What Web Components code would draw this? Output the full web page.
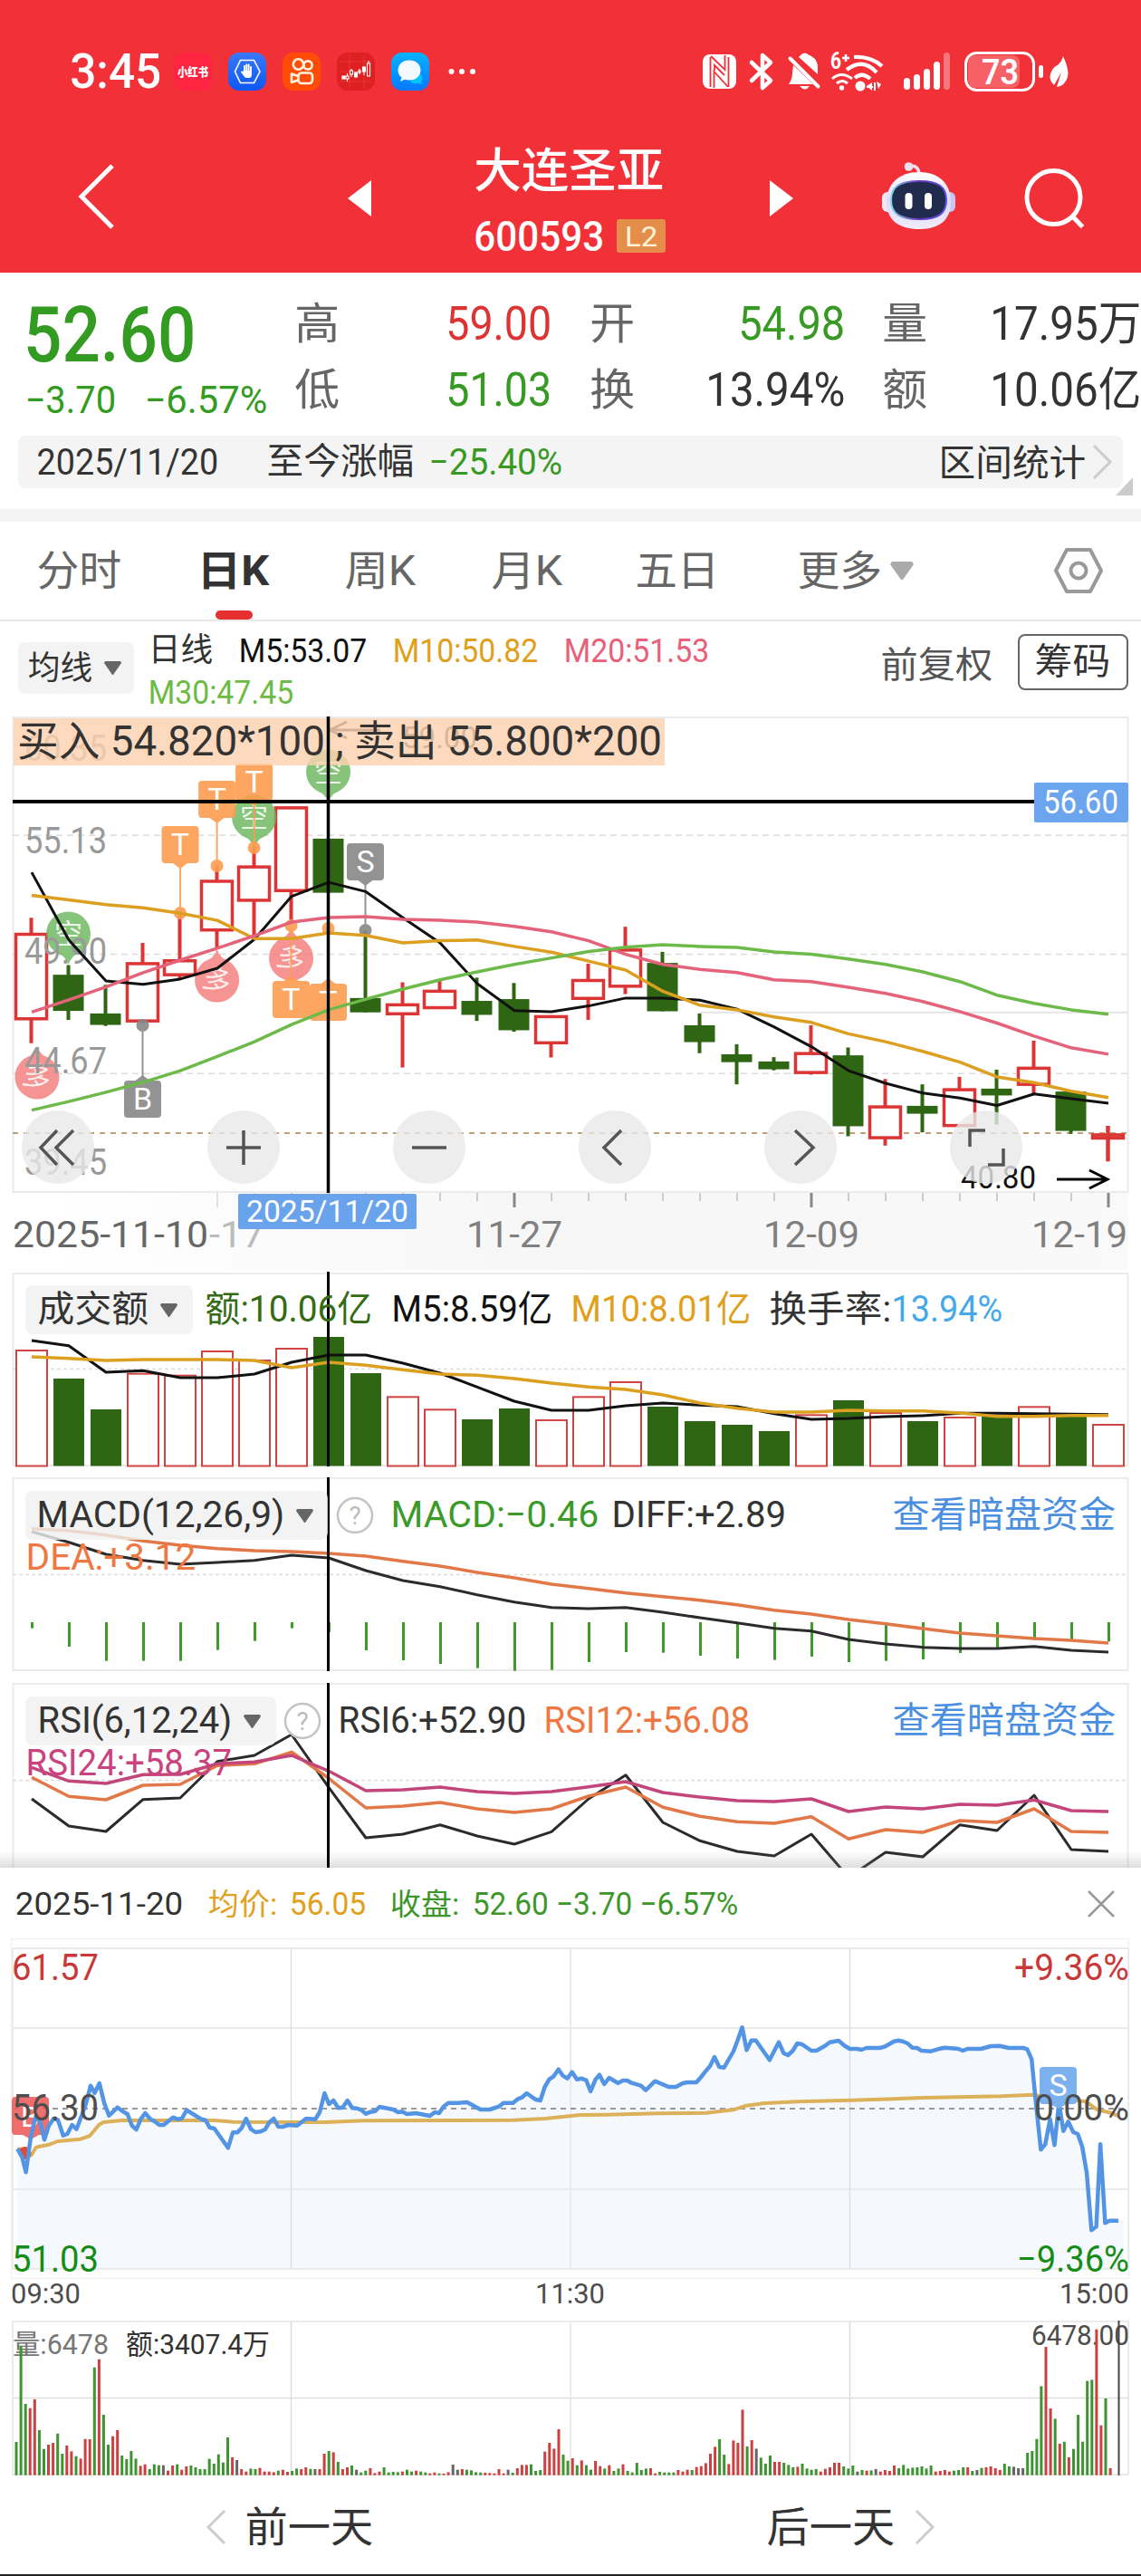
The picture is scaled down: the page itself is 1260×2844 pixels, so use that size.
<!DOCTYPE html>
<html lang="zh-CN">
<head>
<meta charset="utf-8">
<title>大连圣亚 600593</title>
<style>
body {
	margin: 0;
	background: #fff;
	color: #333;
	font-family: Roboto, "Noto Sans CJK SC", sans-serif;
}
</style>
</head>
<body>
<stock-app></stock-app>

<script>
const define = (name, html, setup) => {
  const template = document.createElement('template');
  template.innerHTML = html;
  window.customElements.define(
    name,
    class extends HTMLElement {
      constructor() {
        super();
        this.attachShadow({ mode: 'open' });
        this.shadowRoot.appendChild(template.content.cloneNode(true));
        if (setup) setup(this.shadowRoot, this);
      }
    }
  );
};

// Single line of text condensed to a given width
class FitText extends HTMLElement {
  constructor() {
    super();
    this.attachShadow({ mode: 'open' });
    this.shadowRoot.innerHTML = `
<style>
:host {
	display: inline-block;
	flex: none;
	white-space: nowrap;
	line-height: 1;
}
span {
	display: inline-block;
	transform-origin: 0 50%;
}
</style>
<span><slot></slot></span>`;
  }

  connectedCallback() {
    const width = Number(this.getAttribute('w'));
    const size = Number(this.getAttribute('size'));
    this.style.fontSize = `${size}px`;
    this.style.height = `${size}px`;
    const span = this.shadowRoot.querySelector('span');
    const natural = span.getBoundingClientRect().width;
    this.style.width = `${width}px`;
    // pull back by the side bearing so the glyph edge sits on the box edge
    if (natural) span.style.transform = `translateX(${-size * 0.035}px) scaleX(${(width + size * 0.04) / natural})`;
  }
}
window.customElements.define('fit-text', FitText);

// ---- svg helpers ----
const STEP = 41;
const cx = (i) => 35 + STEP * i;
const label = (x, y, w, size, fill, str, extra = '') =>
  `<text x="${x - 1}" y="${y}" font-size="${size}" fill="${fill}" textLength="${w + 1}" lengthAdjust="spacingAndGlyphs" ${extra}>${str}</text>`;
const series = (values, toY, color, width = 3) =>
  `<polyline fill="none" stroke="${color}" stroke-width="${width}" stroke-linejoin="round" points="${values
    .map((v, i) => `${cx(i)},${toY(v).toFixed(1)}`)
    .join(' ')}"/>`;
const hline = (x1, x2, y, color, width = 2, dash = '') =>
  `<path d="M${x1} ${y}H${x2}" stroke="${color}" stroke-width="${width}" ${dash ? `stroke-dasharray="${dash}"` : ''} fill="none"/>`;
const vline = (x, y1, y2, color, width = 2) =>
  `<path d="M${x} ${y1}V${y2}" stroke="${color}" stroke-width="${width}" fill="none"/>`;
const frame = (y, h) =>
  `<rect x="14.500" y="${y}" width="1231" height="${h}" fill="none" stroke="#ebebeb" stroke-width="2"/>`;

define('status-bar', `
<style>
:host {
	display: flex;
	align-items: center;
	box-sizing: border-box;
	height: 108px;
	padding: 50px 79px 0 79px;
	color: #fff;
}
.apps {
	display: flex;
	gap: 18px;
	margin-left: 14px;
}
.system {
	display: flex;
	align-items: center;
	margin-left: auto;
}
svg {
	display: block;
	overflow: visible;
}
.dots { margin-left: 21px; }
</style>
<fit-text w="99" size="53" style="font-weight:500">3:45</fit-text>
<div class="apps">
	<svg width="42" height="42" viewBox="0 0 42 42"><rect width="42" height="42" rx="12" fill="#ff2442"/><text x="4" y="26" font-size="13" font-weight="900" fill="#fff" textLength="34" lengthAdjust="spacingAndGlyphs">小红书</text></svg>
	<svg width="42" height="42" viewBox="0 0 42 42">
		<defs><linearGradient id="b" x2="0" y2="1"><stop stop-color="#3a78fb"/><stop offset="1" stop-color="#0d58f2"/></linearGradient></defs>
		<rect width="42" height="42" rx="12" fill="url(#b)"/>
		<path d="M13.500 8.500h15L35 21l-6.500 12.500h-15L7.500 21z" fill="none" stroke="#fff" stroke-width="1.600"/>
		<path d="M18 21v-6M20.300 20v-6.500M22.600 20v-6.500M25 21v-5M18 24l-3-2.500" stroke="#fff" stroke-width="1.900" stroke-linecap="round"/>
		<path d="M17 20h9v4c0 2.500-1 4-3 4h-3c-1.500 0-3-2-5-5.500z" fill="#fff"/>
	</svg>
	<svg width="42" height="42" viewBox="0 0 42 42"><rect width="42" height="42" rx="12" fill="#ff4c06"/><g fill="none" stroke="#fff3e0" stroke-width="2.600"><circle cx="17.500" cy="13" r="5.700"/><circle cx="28" cy="14" r="4.600"/><rect x="17.500" y="22.500" width="15.500" height="11.500" rx="3.500"/><path d="M17 26l-7-2.500v9.500l7-2.500" stroke-linejoin="round"/></g></svg>
	<svg width="42" height="42" viewBox="0 0 42 42"><rect width="42" height="42" rx="12" fill="#df2022"/><path d="M3 10h36M3 21h36M3 32h36M14 2v38M30 2v38" stroke="#e83a3a" stroke-width=".8"/><g stroke="#fff" stroke-width="1.100" fill="none"><rect x="6" y="26" width="3" height="3" fill="#fff"/><path d="M11.500 23v9M16 18v9M25 18v6"/><rect x="10" y="26" width="3" height="3" fill="#df2022"/><rect x="14.500" y="20" width="3" height="4" fill="#df2022"/><rect x="19.500" y="22" width="3" height="5" fill="#fff"/><rect x="24" y="20" width="2" height="2"/><rect x="28.500" y="16" width="3" height="5" fill="#fff"/><rect x="33.500" y="12" width="3" height="14"/><path d="M30 21v4M35 9v3"/></g></svg>
	<svg width="42" height="42" viewBox="0 0 42 42">
		<defs><linearGradient id="c" x2="0" y2="1"><stop stop-color="#06b4ff"/><stop offset="1" stop-color="#0877ff"/></linearGradient></defs>
		<rect width="42" height="42" rx="12" fill="url(#c)"/><path d="M28 23a6.500 5.500 0 0 1 5 9l1 3-4-1.200a7 6 0 0 1-9-2z" fill="#04c6fb"/><path d="M20 8.500c7.500 0 12.500 4.800 12.500 11S27.500 30.500 20 30.500q-3 0-5-.8l-5 2.300 1.500-4.500C8.800 25.500 7.500 23 7.500 19.500c0-6.200 5-11 12.500-11z" fill="#f3faff"/>
	</svg>
</div>
<svg class="dots" width="32" height="8" fill="#fff"><circle cx="3.500" cy="4" r="3"/><circle cx="15" cy="4" r="3"/><circle cx="27" cy="4" r="3"/></svg>
<div class="system">
	<svg width="37" height="38" viewBox="0 0 37 38"><rect width="37" height="38" rx="8" fill="#fff"/><path d="M8.500 3v33M28.500 3v33" stroke="#f23038" stroke-width="1.800"/><path d="M9 2l15.500 15V1M12.500 37V19l15.500 17M13 18v-6l11 11" fill="none" stroke="#f23038" stroke-width="1.800"/></svg>
	<svg width="26" height="42" viewBox="0 0 26 42" style="margin-left:15px"><path d="M2 11l21 20-9 8V3l9 8L2 31" fill="none" stroke="#fff" stroke-width="4.500" stroke-linecap="round" stroke-linejoin="round"/></svg>
	<svg width="36" height="42" viewBox="0 0 36 42" style="margin-left:16px" fill="#fff"><path d="M12 5l3-3q4-3 7 0 9 3 11 12v10zM6 14l22 21H1q4-5 4-13zM13 37h11q-5 7-11 0z"/><path d="M6 4l31 31" stroke="#f23038" stroke-width="3"/><path d="M2.500 6.500l31 31" stroke="#fff" stroke-width="4" stroke-linecap="round"/></svg>
	<svg width="60" height="42" viewBox="0 0 60 42" style="margin-left:12px" fill="none" stroke="#fff" stroke-width="4.200"><path d="M25 5q19-1 31 10M17 19q18-14 33 3M26 28q8-7 17 1"/><path d="M1 29q10-9 22 0M6 34q6-5 12 0" stroke-width="3"/><circle cx="11.500" cy="39" r="2.700" fill="#fff" stroke="none"/><circle cx="32" cy="37" r="5.500" fill="#fff" stroke="none"/><path d="M45 33v9l-6-5zM50 31v10M50 32l5 3-3 5z" stroke="none" fill="#fff"/><path d="M39 38h7M48 33v9" stroke-width="2"/><text x="-1" y="18" font-size="25" font-weight="700" fill="#fff" stroke="none" textLength="12" lengthAdjust="spacingAndGlyphs">6</text><path d="M16 2v8M12 6h8" stroke-width="2.600"/></svg>
	<svg width="52" height="42" viewBox="0 0 52 42" style="margin-left:20px" fill="#fff"><rect y="28" width="7" height="13" rx="3.500"/><rect x="11" y="24" width="7" height="17" rx="3.500"/><rect x="22" y="18" width="7" height="23" rx="3.500"/><rect x="33" y="10" width="7" height="31" rx="3.500"/><rect x="44" width="7" height="41" rx="3.500" opacity=".35"/></svg>
	<svg width="87" height="44" viewBox="0 0 87 44" style="margin-left:15px"><rect x="4" y="4" width="57" height="36" rx="8" fill="#fff" opacity=".24"/><rect x="1.500" y="1.500" width="75" height="41" rx="12" fill="none" stroke="#fff" stroke-width="3"/><rect x="82" y="15" width="5" height="14" rx="2.500" fill="#fff"/><text x="19" y="36" font-size="38" font-weight="600" fill="#fff" textLength="41" lengthAdjust="spacingAndGlyphs">73</text></svg>
	<svg width="22" height="34" viewBox="0 0 22 34" style="margin-left:7px"><path d="M15 0q7 15 5 23-3 10-12 11l5-16-8 14Q-3 25 3 15 6 11 10 9q4-4 5-9z" fill="#fff"/></svg>
</div>
`);

define('stock-nav', `
<style>
:host {
	display: flex;
	height: 193px;
	padding-left: 87px;
	align-items: flex-start;
	color: #fff;
}
svg {
	display: block;
	overflow: visible;
	flex: none;
}
.title {
	display: flex;
	flex-direction: column;
	gap: 21px;
	width: 210px;
	margin: 56px 115px 0;
}
.code {
	display: flex;
	gap: 14px;
}
.level {
	display: flex;
	justify-content: center;
	align-items: center;
	width: 54px;
	height: 37px;
	margin-top: 5px;
	border-radius: 3px;
	background: #e58d4b;
	color: #fff3d8;
}
</style>
<svg width="38" height="72" style="margin-top:74px"><path d="M37 1L3 35l34 34" fill="none" stroke="#fff" stroke-width="5"/></svg>
<svg width="26" height="40" style="margin:91px 0 0 259px"><path d="M26 0v40L0 20z" fill="#fff"/></svg>
<div class="title">
	<fit-text w="208" size="52" style="font-weight:500">大连圣亚</fit-text>
	<div class="code"><fit-text w="142" size="47" style="font-weight:500">600593</fit-text><span class="level"><fit-text w="35" size="32">L2</fit-text></span></div>
</div>
<svg width="26" height="40" style="margin-top:91px"><path d="M0 0v40l26-20z" fill="#fff"/></svg>
<svg width="81" height="76" viewBox="0 0 81 76" style="margin:71px 0 0 98px">
	<defs>
		<linearGradient id="h" x2="0" y2="1"><stop stop-color="#fff"/><stop offset=".5" stop-color="#dcd9f8"/><stop offset="1" stop-color="#f0ecfa"/></linearGradient>
		<linearGradient id="r"><stop stop-color="#7ed6e6"/><stop offset=".5" stop-color="#6a35b8"/><stop offset="1" stop-color="#5a50e0"/></linearGradient>
	</defs>
	<path d="M29 5q11-3 12 8" fill="none" stroke="#eedff0" stroke-width="3.500"/><circle cx="29.500" cy="5" r="4.800" fill="#eedff0"/>
	<rect y="33" width="13" height="22" rx="6" fill="#f3e6f4"/><rect x="68" y="33" width="13" height="22" rx="6" fill="#c9c4f4"/>
	<path d="M41 11c22 0 35 13 35 33 0 21-14 30-35 30S5 65 5 44c0-20 14-33 36-33z" fill="url(#h)"/>
	<path d="M41 21c20 0 30 5 30 21 0 15-9 21-30 21S10 57 10 42c0-16 11-21 31-21z" fill="#202b4d" stroke="url(#r)" stroke-width="2"/>
	<rect x="25.500" y="34" width="8" height="18" rx="4" fill="#fff"/><rect x="47" y="34" width="8" height="18" rx="4" fill="#fff"/>
</svg>
<svg width="68" height="68" style="margin:77px 0 0 76px"><circle cx="32.500" cy="33" r="29.500" fill="none" stroke="#fff" stroke-width="5"/><path d="M53.500 54l11 11.500" stroke="#fff" stroke-width="5"/></svg>
`);

define('quote-board', `
<style>
:host {
	display: block;
	position: relative;
	height: 261px;
}
.quote {
	display: flex;
	height: 180px;
}
.last {
	display: flex;
	flex-direction: column;
	gap: 8px;
	box-sizing: border-box;
	width: 327px;
	padding: 27px 0 0 29px;
	color: #339b21;
}
.change {
	display: flex;
	gap: 33px;
}
.grid {
	display: grid;
	grid-template-columns: 48px 234px 92px 232px 91px 236px;
	grid-template-rows: 73px 73px;
	align-items: center;
	padding-top: 20px;
}
.grid fit-text { justify-self: end; }
.grid .name { color: #666; }
.up { color: #dc3434; }
.down { color: #379a24; }
.range {
	display: flex;
	align-items: center;
	height: 58px;
	margin: 0 20px;
	padding-left: 22px;
	border-radius: 8px;
	background: #f4f4f4;
}
.corner {
	position: absolute;
	right: 9px;
	top: 226px;
}
</style>
<div class="quote">
	<div class="last">
		<fit-text w="187" size="85" style="font-weight:500">52.60</fit-text>
		<div class="change"><fit-text w="99" size="42">−3.70</fit-text><fit-text w="134" size="42">−6.57%</fit-text></div>
	</div>
	<div class="grid">
		<fit-text class="name" w="48" size="48">高</fit-text><fit-text class="up" w="115" size="51">59.00</fit-text>
		<fit-text class="name" w="48" size="48">开</fit-text><fit-text class="down" w="116" size="51">54.98</fit-text>
		<fit-text class="name" w="48" size="48">量</fit-text><fit-text w="165" size="51">17.95万</fit-text>
		<fit-text class="name" w="48" size="48">低</fit-text><fit-text class="down" w="115" size="51">51.03</fit-text>
		<fit-text class="name" w="48" size="48">换</fit-text><fit-text w="152" size="51">13.94%</fit-text>
		<fit-text class="name" w="48" size="48">额</fit-text><fit-text w="165" size="51">10.06亿</fit-text>
	</div>
</div>
<div class="range">
	<fit-text w="199" size="41">2025/11/20</fit-text>
	<fit-text w="161" size="40" style="margin-left:55px">至今涨幅</fit-text>
	<fit-text class="down" w="146" size="41" style="margin-left:18px">−25.40%</fit-text>
	<fit-text w="161" size="40" style="margin:3px 0 0 417px">区间统计</fit-text>
	<svg width="26" height="40" style="margin-left:6px"><path d="M3 2l18 18L3 38" fill="none" stroke="#ccc" stroke-width="3"/></svg>
</div>
<svg class="corner" width="19" height="20"><path d="M19 0v20H0z" fill="#ccc"/></svg>
`);

define('period-tabs', `
<style>
:host {
	display: flex;
	align-items: center;
	box-sizing: border-box;
	height: 124px;
	padding-left: 42px;
	border-top: 14px solid #f4f4f4;
	border-bottom: 2px solid #e8e8e8;
	color: #666;
}
.tab {
	display: flex;
	align-items: center;
	height: 108px;
}
.active {
	flex-direction: column;
	box-sizing: border-box;
	padding-top: 31px;
	color: #333;
	font-weight: 700;
}
.active::after {
	content: "";
	width: 41px;
	height: 10px;
	margin-top: 21px;
	border-radius: 5px;
	background: #e63030;
}
</style>
<div class="tab"><fit-text w="92" size="46">分时</fit-text></div>
<div class="tab active" style="margin-left:85px"><fit-text w="78" size="46">日K</fit-text></div>
<div class="tab" style="margin-left:85px"><fit-text w="77" size="46">周K</fit-text></div>
<div class="tab" style="margin-left:85px"><fit-text w="77" size="46">月K</fit-text></div>
<div class="tab" style="margin-left:82px"><fit-text w="91" size="46">五日</fit-text></div>
<div class="tab" style="margin-left:88px"><fit-text w="92" size="46">更多</fit-text><svg width="26" height="20" style="margin-left:9px"><path d="M2 0h22l2 3-12 17h-2L0 3z" fill="#aaa"/></svg></div>
<svg width="54" height="52" style="margin-left:155px"><path d="M14 3h26l12 23-12 23H14L2 26z" fill="none" stroke="#999" stroke-width="4" stroke-linejoin="round"/><circle cx="27" cy="26" r="8.500" fill="none" stroke="#999" stroke-width="4"/></svg>
`);

// Grey dropdown button used in front of every legend
define('pill-select', `
<style>
:host {
	display: inline-flex;
	align-items: center;
	justify-content: center;
	gap: 13px;
	flex: none;
	box-sizing: border-box;
	height: 54px;
	border-radius: 8px;
	background: rgba(240, 240, 240, .8);
	color: #333;
}
svg { margin-right: 2px; }
</style>
<slot></slot><svg width="19" height="15"><path d="M1 0h17l1 2-9 13H9L0 2z" fill="#666"/></svg>
`);

define('ma-legend', `
<style>
:host {
	display: flex;
	box-sizing: border-box;
	height: 102px;
	padding: 14px 14px 0 20px;
}
pill-select {
	width: 128px;
	height: 57px;
	margin-top: 9px;
}
.values {
	display: grid;
	grid-template-columns: repeat(4, max-content);
	grid-auto-rows: 46px;
	column-gap: 30px;
	align-content: start;
	box-sizing: border-box;
	width: 806px;
	padding-left: 17px;
}
.chips {
	display: flex;
	justify-content: center;
	align-items: center;
	box-sizing: border-box;
	width: 122px;
	height: 62px;
	margin-left: 28px;
	border: 2px solid #666;
	border-radius: 8px;
}
</style>
<pill-select><fit-text w="70" size="36">均线</fit-text></pill-select>
<div class="values">
	<fit-text w="70" size="36">日线</fit-text>
	<fit-text w="140" size="37" style="color:#111">M5:53.07</fit-text>
	<fit-text w="159" size="37" style="color:#e0a01c">M10:50.82</fit-text>
	<fit-text w="159" size="37" style="color:#e8607a">M20:51.53</fit-text>
	<fit-text w="159" size="37" style="color:#6cbb45;grid-column:1/4">M30:47.45</fit-text>
</div>
<fit-text w="122" size="40" style="color:#555;margin:15px 0 0 20px">前复权</fit-text>
<div class="chips"><fit-text w="82" size="40">筹码</fit-text></div>
`);

// kind, body top, body bottom, high, low
const candles = [
  ['r', 636, 872, 590, 940], ['g', 749, 850, 722, 875], ['g', 857, 889, 777, 892],
  ['r', 718, 878, 660, 885], ['r', 710, 749, 580, 760], ['r', 488, 624, 443, 675],
  ['r', 448, 541, 390, 640], ['r', 283, 514, 283, 605], ['g', 369, 520, 369, 520],
  ['g', 814, 854, 625, 854], ['r', 833, 858, 770, 1008], ['r', 795, 841, 765, 841],
  ['g', 822, 861, 757, 878], ['g', 817, 904, 772, 908], ['r', 866, 939, 862, 980],
  ['r', 765, 815, 718, 875], ['r', 680, 781, 615, 803], ['g', 716, 851, 685, 851],
  ['g', 890, 937, 857, 968], ['g', 971, 993, 943, 1055], ['g', 991, 1013, 979, 1016],
  ['r', 969, 1022, 890, 1028], ['g', 974, 1172, 952, 1200], ['r', 1118, 1204, 1040, 1226],
  ['g', 1115, 1137, 1055, 1189], ['r', 1070, 1170, 1034, 1170], ['g', 1067, 1086, 1014, 1167],
  ['r', 1010, 1055, 933, 1080], ['g', 1075, 1185, 1075, 1193], ['r', 1196, 1205, 1171, 1270],
];
const ma = {
  m5: [463, 652, 766, 776, 761, 731, 650, 530, 491, 517, 590, 660, 774, 849, 852, 836, 814, 814, 820, 845, 895, 950, 1017, 1052, 1079, 1093, 1114, 1082, 1095, 1108],
  m10: [527, 540, 553, 562, 577, 597, 648, 648, 632, 639, 660, 654, 652, 670, 686, 711, 736, 795, 834, 847, 867, 882, 914, 936, 963, 993, 1034, 1050, 1074, 1092],
  m20: [853, 819, 783, 743, 708, 675, 640, 602, 589, 587, 594, 597, 602, 614, 629, 654, 692, 720, 734, 743, 763, 768, 784, 801, 824, 852, 884, 920, 953, 971],
  m30: [1127, 1103, 1077, 1049, 1017, 977, 936, 888, 847, 817, 789, 763, 741, 720, 702, 684, 672, 665, 670, 673, 685, 692, 705, 720, 741, 768, 806, 829, 847, 859],
};
const py = (v) => 780 + v / 2.529;

const candle = ([kind, top, bottom, high, low], i) => {
  const color = kind === 'r' ? '#dc3535' : '#2f6614';
  const x = cx(i) - 0.5;
  const body =
    kind === 'r'
      ? `<rect x="${x - 17}" y="${py(top)}" width="34" height="${py(bottom) - py(top)}" fill="#fff" stroke="${color}" stroke-width="3.500"/>`
      : `<rect x="${x - 17}" y="${py(top)}" width="34" height="${py(bottom) - py(top)}" fill="${color}"/>`;
  return vline(x, py(high), py(low), color, 4) + body + (i === 29 ? vline(x, py(high), py(low), color, 4) : '');
};

// Square trade flag; dir 1 points down, -1 points up
const flag = (x, y, dot, letter, color, dir) => {
  const edge = dir > 0 ? y + 41 : y;
  return `<g opacity=".9">${vline(x, edge, dot, color, 2)}<circle cx="${x}" cy="${dot}" r="7" fill="${color}"/>
  <rect x="${x - 20.5}" y="${y}" width="41" height="41" rx="4" fill="${color}"/><path d="M${x - 8} ${edge}l8 ${6 * dir}l8 ${-6 * dir}z" fill="${color}"/></g>
  <text x="${x}" y="${y + 32}" font-size="34" text-anchor="middle" fill="#fff">${letter}</text>`;
};

const balloon = (x, y, str, color, dir) =>
  `<g opacity=".82"><circle cx="${x}" cy="${y}" r="24.500" fill="${color}"/><path d="M${x - 16} ${y + 18 * dir}Q${x - 3} ${y + 24 * dir} ${x} ${y + 34 * dir}Q${x + 3} ${y + 24 * dir} ${x + 16} ${y + 18 * dir}z" fill="${color}"/></g>
  <text x="${x}" y="${y + 11}" font-size="31" text-anchor="middle" fill="#fff" fill-opacity=".85" transform="rotate(${dir < 0 ? 18 : 0} ${x} ${y})">${str}</text>`;

define('kline-chart', `
<style>
:host {
	display: block;
	position: relative;
	height: 614px;
}
svg { display: block; }
.tools {
	position: absolute;
	left: 24px;
	top: 438px;
	display: flex;
	gap: 125px;
}
.tools svg {
	border-radius: 50%;
	background: rgba(232, 232, 232, .8);
	fill: none;
	stroke: #555;
	stroke-width: 3.500;
}
</style>
<svg class="plot" width="1260" height="614" viewBox="0 788 1260 614"></svg>
<div class="tools">
	<svg width="80" height="81"><path d="M39 22L21 41l18 19M57 22L38 41l19 19"/></svg>
	<svg width="80" height="81"><path d="M21 41h38M40 22v38"/></svg>
	<svg width="80" height="81"><path d="M21 41h38"/></svg>
	<svg width="80" height="81"><path d="M47 22L28 41l19 19"/></svg>
	<svg width="80" height="81"><path d="M34 22l20 19-20 19"/></svg>
	<svg width="80" height="81"><path d="M22 40V22h17M59 42v18H42"/></svg>
</div>
`, (root) => {
  const grey = '#999';
  const orange = '#fd9d50';
  let out = `<defs><linearGradient id="axis"><stop offset=".05" stop-color="#fff"/><stop offset=".5" stop-color="#f6f6f6"/><stop offset="1" stop-color="#f9f9f9"/></linearGradient></defs>
  <rect x="0" y="1317" width="1246" height="85" fill="url(#axis)"/>` + frame(792, 524);
  [922.3, 1053.6, 1185.3].forEach((y) => (out += hline(14, 1246, y, '#dcdcdc', 1.5, '7 5')));
  out += hline(14, 1246, 1251, '#bf9f78', 2, '6 6') + hline(773, 1246, 1117.7, '#e4e4e4', 2);
  out += candles.map(candle).join('');
  out += balloon(75.5, 1031, '空', '#6db85f', 1) + balloon(280.6, 902, '空', '#6db85f', 1) + balloon(362.5, 852, '空', '#6db85f', 1);
  out += balloon(41, 1189, '多', '#f57c7c', -1) + balloon(239.6, 1082, '多', '#f57c7c', -1) + balloon(321.5, 1058, '多', '#f57c7c', -1);
  out += flag(199, 912, 1008, 'T', orange, 1) + flag(239.6, 862, 956, 'T', orange, 1) + flag(280.6, 843, 936, 'T', orange, 1);
  out += flag(321.5, 1083, 1022, 'T', orange, -1) + flag(362.5, 1086, 1025, 'T', orange, -1);
  out += flag(403.5, 931, 1027, 'S', '#888', 1) + flag(157.5, 1193, 1132, 'B', '#888', -1);
  out += label(28, 840, 90, 40, grey, '60.35') + label(28, 942, 90, 40, grey, '55.13') + label(28, 1064, 90, 40, grey, '49.90');
  out += label(28, 1185, 90, 40, grey, '44.67') + label(28, 1297, 90, 40, grey, '39.45');
  out += series(ma.m5, py, '#111') + series(ma.m10, py, '#dc9f1f', 3.5) + series(ma.m20, py, '#e5637a', 3.5) + series(ma.m30, py, '#6dba4a', 3.5);
  out += label(445, 826, 82, 34, '#333', '59.00') + '<path d="M420 806H365M383 797l-19 9 19 9" stroke="#222" stroke-width="3" fill="none"/>';
  out += label(1062, 1312, 82, 35, '#111', '40.80') + '<path d="M1167 1302h56M1203 1292l20 10-20 10" stroke="#000" stroke-width="3" fill="none"/>';
  out += `<rect x="15" y="793" width="719" height="52" fill="#fdd2b0" opacity=".82"/>`;
  out += hline(14, 1246, 885, '#000', 4);
  out += label(20, 834, 711, 46, '#333', '买入 54.820*100 ; 卖出 55.800*200');
  out += `<rect x="1142" y="864" width="104" height="44" rx="2" fill="#6ba5ed"/>` + label(1153, 898, 82, 36, '#fff', '56.60');
  for (let i = 5; i < 30; i++) {
    const major = i === 13 || i === 21 || i === 29;
    out += vline(cx(i), 1317, major || i === 5 ? 1333 : 1326, major ? '#888' : i < 7 ? '#e2e2e2' : '#ccc', major ? 3 : 2);
  }
  out += label(232, 1377, 60, 41, '#bbb', '-17') + label(15, 1377, 215, 41, '#666', '2025-11-10');
  out += label(516, 1377, 105, 41, '#808080', '11-27') + label(844, 1377, 105, 41, '#808080', '12-09') + label(1140, 1377, 105, 41, '#808080', '12-19');
  out += vline(362.5, 791, 1317, '#000', 3.5);
  out += `<rect x="263" y="1318" width="197" height="39" rx="2" fill="#69a3ec"/>` + label(273, 1349, 178, 34, '#fff', '2025/11/20');
  root.querySelector('.plot').innerHTML = out;
});

// Frame with a legend laid over the plot
define('indicator-panel', `
<style>
:host { display: grid; }
svg, header { grid-area: 1 / 1; }
svg { display: block; }
header {
	z-index: 1;
	display: flex;
	align-content: flex-start;
	flex-wrap: wrap;
	padding: 17px 28px 0 28px;
}
.row {
	display: flex;
	align-items: center;
	width: 100%;
	height: 54px;
}
.second {
	width: 100%;
	padding-left: 2px;
	line-height: 0;
}
</style>
<svg></svg>
<header><div class="row"><slot></slot></div><div class="second"><slot name="second"></slot></div></header>
`, (root, host) => {
  const plots = { turnover, macd, rsi };
  const [top, height] = host.getAttribute('area').split(' ').map(Number);
  const svg = root.querySelector('svg');
  svg.setAttribute('width', 1260);
  svg.setAttribute('height', height);
  svg.setAttribute('viewBox', `0 ${top} 1260 ${height}`);
  svg.innerHTML = plots[host.getAttribute('plot')]();
});

function turnover() {
  const y = (v) => 1390 + v / 3;
  const kinds = 'rggrrrrrggrrggrrrggggrgrgrgrgr';
  const tops = [303, 396, 498, 380, 386, 306, 336, 297, 258, 378, 457, 499, 531, 495, 534, 457, 408, 489, 537, 549, 570, 517, 468, 510, 537, 525, 520, 490, 520, 549];
  const m5 = [270, 287, 375, 370, 393, 393, 381, 342, 318, 318, 345, 378, 424, 471, 501, 501, 486, 477, 484, 489, 512, 531, 528, 522, 519, 511, 511, 512, 514, 515];
  const m10 = [324, 329, 336, 333, 333, 333, 336, 360, 342, 352, 367, 381, 385, 396, 411, 424, 432, 450, 477, 494, 507, 507, 501, 503, 503, 510, 521, 521, 518, 518];
  let out = frame(1406, 212) + hline(14, 1246, 1511.5, '#dcdcdc', 1.5, '4 3');
  tops.forEach((top, i) => {
    const red = kinds[i] === 'r';
    out += `<rect x="${cx(i) - 17}" y="${y(top)}" width="34" height="${1618.5 - y(top)}" fill="${red ? '#fff' : '#2f6614'}" ${red ? 'stroke="#cf4444" stroke-width="2"' : ''}/>`;
  });
  return out + series(m5, y, '#111') + series(m10, y, '#dca020', 3.5) + vline(362.5, 1404, 1619, '#000', 3);
}

function macd() {
  const y = (v) => 1390 + v / 3;
  const diff = [903, 938, 978, 998, 1011, 1005, 998, 981, 990, 1032, 1065, 1085, 1112, 1136, 1154, 1158, 1154, 1170, 1188, 1205, 1223, 1232, 1260, 1275, 1286, 1290, 1290, 1283, 1296, 1302];
  const dea = [893, 900, 914, 934, 948, 959, 966, 969, 975, 984, 1001, 1017, 1038, 1056, 1077, 1091, 1106, 1118, 1130, 1145, 1163, 1176, 1194, 1208, 1224, 1239, 1248, 1257, 1263, 1272];
  const ends = [1223, 1284, 1331, 1331, 1331, 1295, 1265, 1223, 1236, 1296, 1329, 1341, 1355, 1364, 1361, 1335, 1302, 1304, 1314, 1323, 1328, 1317, 1335, 1331, 1326, 1305, 1290, 1262, 1260, 1267];
  let out = frame(1632, 212) + hline(14, 1246, 1738.5, '#dcdcdc', 1.5, '4 3');
  ends.forEach((end, i) => (out += vline(cx(i) + 0.5, 1791, y(end), '#3f9a2c', 3)));
  return out + series(diff, y, '#2b2b2b') + series(dea, y, '#e27747', 3.5) + vline(362.5, 1631, 1845, '#000', 3);
}

function rsi() {
  const y = (v) => 1840 + v / 3;
  const r6 = [438, 528, 546, 440, 435, 314, 294, 225, 400, 567, 555, 524, 561, 588, 547, 438, 359, 516, 577, 612, 627, 555, 698, 615, 630, 524, 543, 426, 606, 612];
  const r12 = [367, 430, 441, 393, 390, 328, 322, 283, 370, 468, 462, 450, 471, 483, 471, 429, 399, 466, 496, 514, 519, 497, 571, 540, 549, 510, 516, 471, 546, 549];
  const r24 = [334, 379, 387, 358, 357, 322, 316, 294, 346, 411, 408, 399, 414, 420, 414, 398, 381, 417, 432, 444, 447, 438, 480, 465, 471, 456, 459, 442, 477, 480];
  return `<defs><linearGradient id="s" x2="0" y2="1"><stop stop-color="#888" stop-opacity="0"/><stop offset="1" stop-color="#888" stop-opacity=".28"/></linearGradient></defs>` +
    frame(1859, 230) + hline(14, 1246, 1965.5, '#dcdcdc', 1.5, '4 3') +
    series(r6, y, '#2b2b2b') + series(r12, y, '#e27747', 3.5) + series(r24, y, '#c2457b', 3.5) +
    `<rect y="2044" width="1260" height="18" fill="url(#s)"/>` + vline(362.5, 1858, 2062, '#000', 3);
}

define('help-icon', `
<style>:host { display: block; flex: none; } svg { display: block; }</style>
<svg width="42" height="42"><circle cx="21" cy="21" r="19" fill="none" stroke="#c4c4c4" stroke-width="2.500"/><text x="21" y="31" font-size="28" text-anchor="middle" fill="#bbb">?</text></svg>
`);

// ---- intraday sheet ----
const pricePath = '47,757 60,785 70,835 83,720 95,655 108,665 120,727 132,680 145,657 157,662 171,713 182,708 195,678 207,692 220,650 232,610 245,548 256,572 269,540 282,605 295,647 318,620 332,633 345,642 357,680 369,693 381,658 393,639 406,658 418,666 431,678 443,678 468,653 480,659 492,657 505,629 530,648 545,659 556,662 567,686 580,690 617,754 630,703 642,703 654,688 666,657 679,692 691,702 705,700 717,693 729,669 741,657 753,684 765,684 780,678 804,680 828,657 853,659 865,635 878,573 890,609 902,597 915,622 927,620 940,597 953,622 965,623 977,628 990,641 1002,635 1015,632 1027,618 1064,627 1077,636 1088,634 1101,642 1125,639 1163,648 1176,636 1188,639 1200,617 1213,605 1240,605 1264,603 1300,627 1325,627 1350,617 1362,605 1388,605 1400,593 1412,587 1425,573 1448,593 1462,597 1474,552 1486,527 1498,517 1511,494 1523,515 1535,524 1548,503 1561,527 1573,524 1586,530 1598,567 1611,527 1622,512 1635,543 1648,522 1672,539 1685,531 1697,531 1709,539 1734,548 1747,563 1772,533 1809,552 1829,552 1847,540 1859,537 1884,537 1897,519 1909,500 1921,483 1933,453 1946,486 1959,488 1984,435 1995,400 2008,355 2020,430 2033,398 2045,398 2082,463 2107,404 2120,440 2132,447 2145,432 2157,408 2170,411 2195,432 2209,432 2232,416 2245,404 2269,399 2284,415 2299,426 2319,426 2331,429 2344,423 2381,423 2395,418 2419,401 2431,398 2444,402 2456,408 2468,422 2481,423 2493,432 2519,434 2544,425 2556,422 2593,426 2605,432 2617,426 2654,426 2681,417 2704,416 2729,423 2769,423 2779,427 2791,460 2803,610 2816,760 2828,742 2841,660 2853,745 2865,605 2877,698 2890,667 2904,702 2916,708 2928,750 2940,835 2953,1027 2966,1015 2977,742 2990,1003 3002,995 3026,995';
const averagePath = '47,757 60,760 70,785 85,778 97,753 108,749 133,743 157,732 218,725 243,714 268,677 280,669 330,663 580,663 630,668 880,669 985,664 1388,662 1475,657 1540,649 1569,645 1639,644 1779,640 1911,638 1984,628 2019,614 2069,606 2159,601 2304,596 2419,592 2499,588 2709,583 2794,578 2859,590 2934,600 2949,610 2969,628 2999,636 3026,648';
const volumes = 'g110 g428 g236 r222 r251 g149 g87 r101 r107 g138 g71 r98 r79 g63 r55 r120 r119 g357 r384 g200 g101 r129 r149 g65 g53 g80 g55 r31 r36 g20 g36 g33 k33 r15 r32 g36 r18 r29 g32 g26 g20 g20 g54 g38 g69 g42 g125 r59 k50 r20 r12 g22 g20 r24 r12 r12 r10 g15 r18 r11 g14 g22 r20 r26 g21 k20 r20 r71 g80 r76 g44 r20 r26 g32 k18 g9 g15 r23 r7 r12 g26 g9 g11 g10 r12 g18 g12 r15 g12 g9 r6 r9 g6 r5 r10 k35 k18 r20 g18 g16 g10 g9 r8 r7 r6 r20 r6 k18 g8 r23 r34 r34 g36 g14 g17 r78 r107 r88 r152 g68 g48 r56 g33 r49 g33 g18 r47 r30 g22 r33 g14 g22 r36 g14 g9 g41 g17 g22 r23 r6 g11 g9 g9 g9 r17 r12 r18 g17 r27 r30 r40 r71 r94 g119 g68 r37 r115 r107 r217 g95 r116 k88 g58 g38 g65 r44 r44 g41 g34 g26 r28 g38 g22 g18 g20 r12 r21 r26 r41 r41 g29 g22 g32 k12 g17 r15 g16 k20 r12 r17 r14 r32 g23 g34 g22 g25 g26 g29 g22 g32 r12 r14 r17 r12 g15 g17 g26 r26 g14 k17 g24 r26 r29 r23 r17 g38 g29 k28 k23 k23 g74 g80 g120 g295 r425 r221 g187 r104 g111 r59 g87 g200 g111 g312 g316 r483 r165 g254 r23';

const toPoints = (str) =>
  str
    .split(' ')
    .map((p) => p.split(',').map(Number))
    .map(([x, y]) => `${(x / 2.45).toFixed(1)},${(2120 + y / 3).toFixed(1)}`)
    .join(' ');

define('day-chart', `
<style>
:host { display: block; }
svg { display: block; }
</style>
<svg width="1260" height="600" viewBox="0 2140 1260 600"></svg>
`, (root) => {
  const price = toPoints(pricePath);
  let out = `<rect x="12.500" y="2140.500" width="1234" height="375" fill="none" stroke="#f2f2f2" stroke-width="1.500"/>
  <polygon points="19,2505 ${price} 1241,2452 1241,2505" fill="#f5f9fe"/>`;
  [2151, 2239, 2417, 2505].forEach((y) => (out += hline(13, 1247, y, '#e9ebed', 2)));
  [14, 630, 1246].forEach((x) => (out += vline(x, 2151, 2505, '#e9ebed', 2)));
  [321.5, 938.5].forEach((x) => (out += vline(x, 2151, 2505, '#dcdfe2', 1.5)));
  out += hline(14, 1246, 2328, '#999', 2, '6 5');
  out += `<g opacity=".9"><rect x="13" y="2315" width="41" height="42" rx="4" fill="#ee5f5f"/><path d="M25 2357l9 5 9-5z" fill="#ee5f5f"/></g><text x="33" y="2348" font-size="32" text-anchor="middle" fill="#fff">B</text>`;
  out += `<polyline points="${toPoints(averagePath)}" fill="none" stroke="#ddb05a" stroke-width="4" stroke-linejoin="round"/><circle cx="27.500" cy="2377" r="7" fill="#dc4a38"/>`;
  out += `<polyline points="${price}" fill="none" stroke="#5494e4" stroke-width="4.500" stroke-linejoin="round"/>`;
  out += `<rect x="1148" y="2282" width="41" height="41" rx="4" fill="#7cb0ef"/><path d="M1160 2323l9 5 9-5z" fill="#7cb0ef"/><text x="1168.500" y="2314" font-size="34" text-anchor="middle" fill="#fff">S</text>`;
  out += label(14, 2186, 95, 40, '#c93838', '61.57') + label(14, 2341, 95, 40, '#4d4d4d', '56.30') + label(14, 2508, 95, 40, '#158c15', '51.03');
  out += label(1121, 2186, 126, 40, '#c93838', '+9.36%') + label(1143, 2341, 104, 40, '#4d4d4d', '0.00%') + label(1124, 2508, 123, 40, '#158c15', '−9.36%');
  out += label(13, 2543, 76, 31, '#4d4d4d', '09:30') + label(592, 2543, 76, 31, '#4d4d4d', '11:30') + label(1171, 2543, 76, 31, '#4d4d4d', '15:00');

  out += `<rect x="14" y="2563" width="1232" height="169" fill="none" stroke="#ebebeb" stroke-width="2"/>`;
  out += hline(14, 1246, 2647.5, '#ddd', 1.5) + vline(321.5, 2563, 2732, '#ddd', 1.5) + vline(630, 2563, 2732, '#e6e6e6', 1.5) + vline(938.5, 2563, 2732, '#ddd', 1.5);
  out += label(15, 2599, 105, 31, '#777', '量:6478') + label(140, 2599, 158, 31, '#333', '额:3407.4万') + label(1140, 2589, 107, 31, '#4d4d4d', '6478.00');
  const colors = { r: '#cb4040', g: '#3d9430', k: '#666' };
  volumes.split(' ').forEach((v, i) => {
    const h = Number(v.slice(1)) / 3;
    out += `<rect x="${(16.5 + i * 5.076).toFixed(1)}" y="${(2732.7 - h).toFixed(1)}" width="3" height="${h.toFixed(1)}" fill="${colors[v[0]]}"/>`;
  });
  out += vline(1235.5, 2562, 2733, '#444', 2);
  root.querySelector('svg').innerHTML = out;
});

define('day-sheet', `
<style>
:host {
	display: block;
	box-sizing: border-box;
	height: 782px;
	border-bottom: 2px solid #222;
	background: #fff;
}
header {
	display: flex;
	align-items: center;
	box-sizing: border-box;
	height: 78px;
	padding: 2px 0 0 18px;
}
footer {
	display: flex;
	align-items: center;
	height: 100px;
	padding-left: 228px;
}
.avg { color: #e0a020; }
.close { color: #3c962a; }
</style>
<header>
	<fit-text w="184" size="35">2025-11-20</fit-text>
	<fit-text class="avg" w="75" size="33" style="margin-left:29px">均价:</fit-text>
	<fit-text class="avg" w="83" size="35" style="margin-left:15px">56.05</fit-text>
	<fit-text class="close" w="75" size="33" style="margin-left:28px">收盘:</fit-text>
	<fit-text class="close" w="292" size="35" style="margin-left:16px">52.60 −3.70 −6.57%</fit-text>
	<svg width="30" height="30" style="margin-left:386px"><path d="M1 1l28 28M29 1L1 29" stroke="#999" stroke-width="2.500"/></svg>
</header>
<day-chart></day-chart>
<footer>
	<svg width="22" height="40"><path d="M20 2L2 20l18 18" fill="none" stroke="#ccc" stroke-width="3"/></svg>
	<fit-text w="140" size="46" style="margin-left:22px">前一天</fit-text>
	<fit-text w="140" size="46" style="margin-left:436px">后一天</fit-text>
	<svg width="22" height="40" style="margin-left:22px"><path d="M2 2l18 18L2 38" fill="none" stroke="#ccc" stroke-width="3"/></svg>
</footer>
`);

define('stock-app', `
<style>
:host {
	display: block;
	width: 1260px;
	height: 2844px;
	overflow: hidden;
}
.top {
	background: #f23038;
}
.link {
	margin-left: auto;
	color: #4a8fe0;
}
</style>
<div class="top">
	<status-bar></status-bar>
	<stock-nav></stock-nav>
</div>
<quote-board></quote-board>
<period-tabs></period-tabs>
<ma-legend></ma-legend>
<kline-chart></kline-chart>
<indicator-panel plot="turnover" area="1402 225">
	<pill-select style="width:185px"><fit-text w="121" size="40">成交额</fit-text></pill-select>
	<fit-text w="183" size="40" style="margin-left:15px;color:#356b15">额:10.06亿</fit-text>
	<fit-text w="176" size="40" style="margin-left:23px;color:#111">M5:8.59亿</fit-text>
	<fit-text w="197" size="40" style="margin-left:22px;color:#e0a01c">M10:8.01亿</fit-text>
	<fit-text w="133" size="40" style="margin-left:22px">换手率:</fit-text>
	<fit-text w="121" size="40" style="margin-left:2px;color:#45a8e8">13.94%</fit-text>
</indicator-panel>
<indicator-panel plot="macd" area="1629 227" style="margin-top:2px">
	<pill-select style="width:334px"><fit-text w="272" size="40">MACD(12,26,9)</fit-text></pill-select>
	<help-icon style="margin-left:9px"></help-icon>
	<fit-text w="228" size="40" style="margin-left:20px;color:#3b9a29">MACD:−0.46</fit-text>
	<fit-text w="191" size="40" style="margin-left:16px">DIFF:+2.89</fit-text>
	<fit-text class="link" w="245" size="40">查看暗盘资金</fit-text>
	<fit-text slot="second" w="186" size="40" style="color:#ef7742">DEA:+3.12</fit-text>
</indicator-panel>
<indicator-panel plot="rsi" area="1856 206">
	<pill-select style="width:277px"><fit-text w="213" size="40">RSI(6,12,24)</fit-text></pill-select>
	<help-icon style="margin-left:8px"></help-icon>
	<fit-text w="206" size="40" style="margin-left:20px">RSI6:+52.90</fit-text>
	<fit-text w="226" size="40" style="margin-left:21px;color:#ef7742">RSI12:+56.08</fit-text>
	<fit-text class="link" w="245" size="40">查看暗盘资金</fit-text>
	<fit-text slot="second" w="226" size="40" style="color:#c9447f">RSI24:+58.37</fit-text>
</indicator-panel>
<day-sheet></day-sheet>
`);
</script>
</body>
</html>
